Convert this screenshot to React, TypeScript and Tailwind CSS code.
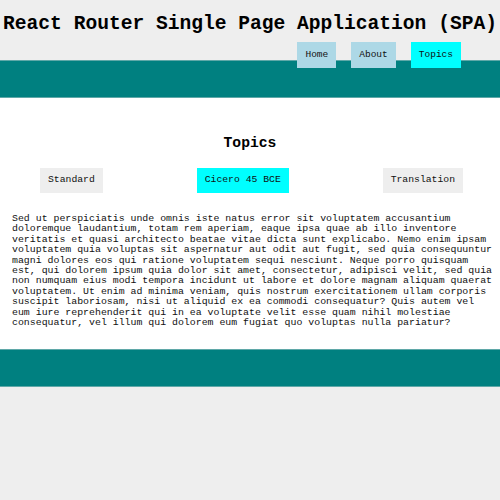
import React from "react";

const lines = [
  "Sed ut perspiciatis unde omnis iste natus error sit voluptatem accusantium",
  "doloremque laudantium, totam rem aperiam, eaque ipsa quae ab illo inventore",
  "veritatis et quasi architecto beatae vitae dicta sunt explicabo. Nemo enim ipsam",
  "voluptatem quia voluptas sit aspernatur aut odit aut fugit, sed quia consequuntur",
  "magni dolores eos qui ratione voluptatem sequi nesciunt. Neque porro quisquam",
  "est, qui dolorem ipsum quia dolor sit amet, consectetur, adipisci velit, sed quia",
  "non numquam eius modi tempora incidunt ut labore et dolore magnam aliquam quaerat",
  "voluptatem. Ut enim ad minima veniam, quis nostrum exercitationem ullam corporis",
  "suscipit laboriosam, nisi ut aliquid ex ea commodi consequatur? Quis autem vel",
  "eum iure reprehenderit qui in ea voluptate velit esse quam nihil molestiae",
  "consequatur, vel illum qui dolorem eum fugiat quo voluptas nulla pariatur?",
];

export default function App() {
  return (
    <div
      className="min-h-[500px] bg-[#eeeeee] text-black"
      style={{ fontFamily: '"Liberation Mono", "Courier New", monospace' }}
    >
      <h1 className="pt-[12px] h-[42px] text-center text-[19.6px] leading-[24px] font-bold whitespace-nowrap">
        React Router Single Page Application (SPA)
      </h1>
      <nav className="relative z-10 flex h-[18px] items-start justify-end gap-[15px] pr-[39px] text-[9.5px] text-[#111]">
        <a className="flex h-[26px] items-center bg-[#add8e6] px-[8px]">Home</a>
        <a className="flex h-[26px] items-center bg-[#add8e6] px-[8px]">About</a>
        <a className="flex h-[26px] items-center bg-[#00ffff] px-[8px]">Topics</a>
      </nav>
      <div className="h-[38px] border-y border-[#5fa8a8] bg-[#008080]" />
      <main className="bg-white pb-[21px]">
        <h2 className="pt-[36px] text-center text-[14.7px] leading-[18px] font-bold">Topics</h2>
        <div className="mt-[16px] flex justify-between pl-[40px] pr-[37px] text-[9.75px] text-[#111]">
          <a className="flex h-[25px] items-center bg-[#eeeeee] px-[8px]">Standard</a>
          <a className="flex h-[25px] items-center bg-[#00ffff] px-[8px]">Cicero 45 BCE</a>
          <a className="flex h-[25px] items-center bg-[#eeeeee] px-[8px]">Translation</a>
        </div>
        <p className="mt-[21px] px-[12px] text-[9.9px] leading-[10.4px] text-[#111]">
          {lines.map((l, i) => (
            <span key={i} className="block whitespace-nowrap">
              {l}
            </span>
          ))}
        </p>
      </main>
      <div className="h-[38px] border-y border-[#5fa8a8] bg-[#008080]" />
    </div>
  );
}
